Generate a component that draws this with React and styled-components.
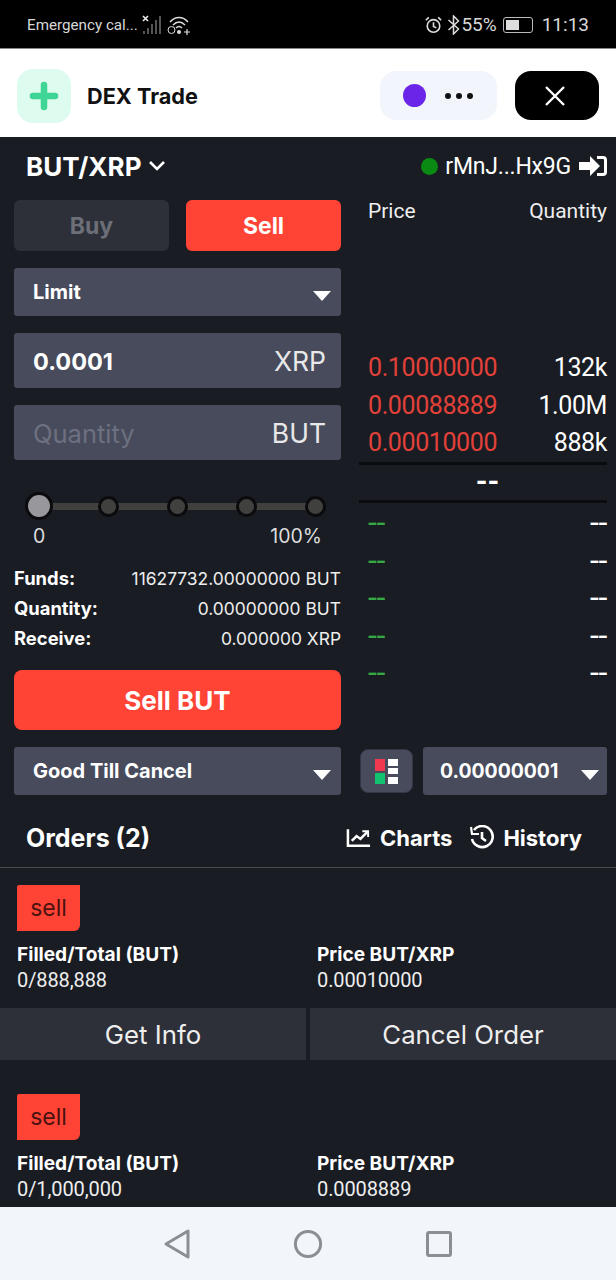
import React from 'react'
import styled, { createGlobalStyle } from 'styled-components'

const sans = `Inter, Lato, sans-serif`
const din = `Roboto, "Liberation Sans", sans-serif`

const asks = [
  ['0.10000000', '132k'],
  ['0.00088889', '1.00M'],
  ['0.00010000', '888k'],
]

const orders = [
  { total: '0/888,888', price: '0.00010000', actions: true },
  { total: '0/1,000,000', price: '0.0008889' },
]

function App() {
  return (
    <Phone>
      <GlobalStyle />
      <StatusBar>
        <StatusSide>
          <Carrier>Emergency cal...</Carrier>
          <svg width="20" height="20" viewBox="0 0 20 20">
            <path d="M1 1l5 5M6 1L1 6" stroke="#eee" strokeWidth="1.6" />
            <path d="M2 16v3M6 13v6M10 9v10M14 5v14M18 1v18" stroke="#555" strokeWidth="2" />
          </svg>
          <WifiIcon width="24" height="20" viewBox="0 0 24 20" fill="none" stroke="#ddd" strokeWidth="1.5">
            <path d="M3 7c5-6 13-6 18 0M6 10c4-4 8-4 12 0M9 13c2-2 4-2 6 0" />
            <circle cx="4.5" cy="15" r="3.5" strokeWidth="1" />
            <circle cx="12" cy="17" r="2" fill="#ddd" stroke="none" />
            <path d="M17 17h6M20 14v6" strokeWidth="1.2" />
          </WifiIcon>
        </StatusSide>
        <StatusSide>
          <svg width="19" height="20" viewBox="0 0 20 20" fill="none" stroke="#ddd" strokeWidth="1.7">
            <circle cx="10" cy="11" r="6.6" />
            <path d="M10 7v4.5l3 1.5M2 5l3-3M18 5l-3-3" />
          </svg>
          <BluetoothIcon width="13" height="20" viewBox="0 0 12 20" fill="none" stroke="#ddd" strokeWidth="1.5">
            <path d="M1 5l10 9-5 5V1l5 5-10 9" />
          </BluetoothIcon>
          <StatusText>55%</StatusText>
          <Battery>
            <BatteryFill />
          </Battery>
          <StatusText>11:13</StatusText>
        </StatusSide>
      </StatusBar>

      <AppBar>
        <AppLogo>
          <svg width="30" height="30" viewBox="0 0 30 30">
            <path d="M15 4v22M4 15h22" stroke="#3fd596" strokeWidth="6.5" strokeLinecap="round" />
          </svg>
        </AppLogo>
        <AppTitle>DEX Trade</AppTitle>
        <WalletPill>
          <WalletDot />
          <Dots>
            <i />
            <i />
            <i />
          </Dots>
        </WalletPill>
        <CloseButton>
          <svg width="22" height="22" viewBox="0 0 22 22">
            <path d="M2 2l18 18M20 2L2 20" stroke="#fff" strokeWidth="2.4" />
          </svg>
        </CloseButton>
      </AppBar>

      <Main>
        <PairRow>
          <PairName>
            BUT/XRP
            <svg width="18" height="12" viewBox="0 0 18 12" fill="none" stroke="#fff" strokeWidth="2.6">
              <path d="M2 2l7 7 7-7" />
            </svg>
          </PairName>
          <Account>
            <GreenDot />
            <AccountId>rMnJ...Hx9G</AccountId>
            <svg width="30" height="24" viewBox="0 0 30 24" fill="#fff">
              <path d="M1 8h11V2l10 10-10 10v-6H1z" />
              <path d="M19 2h6a4 4 0 0 1 4 4v12a4 4 0 0 1-4 4h-6v-3h6a1 1 0 0 0 1-1V6a1 1 0 0 0-1-1h-6z" />
            </svg>
          </Account>
        </PairRow>

        <Columns>
          <LeftColumn>
            <TabRow>
              <SideTab>Buy</SideTab>
              <SideTab $active>Sell</SideTab>
            </TabRow>
            <Select>
              Limit
              <Caret />
            </Select>
            <Field>
              <FieldValue>0.0001</FieldValue>
              <FieldUnit>XRP</FieldUnit>
            </Field>
            <Field>
              <FieldValue $placeholder>Quantity</FieldValue>
              <FieldUnit>BUT</FieldUnit>
            </Field>
            <Slider>
              <SliderTrack>
                <KnobSlot>
                  <Knob $first />
                </KnobSlot>
                <KnobSlot>
                  <Knob />
                </KnobSlot>
                <KnobSlot>
                  <Knob />
                </KnobSlot>
                <KnobSlot>
                  <Knob />
                </KnobSlot>
                <KnobSlot>
                  <Knob />
                </KnobSlot>
              </SliderTrack>
              <SliderLabels>
                <span>0</span>
                <span>100%</span>
              </SliderLabels>
            </Slider>
            <Summary>
              <SummaryRow>
                <b>Funds:</b>
                <span>11627732.00000000 BUT</span>
              </SummaryRow>
              <SummaryRow>
                <b>Quantity:</b>
                <span>0.00000000 BUT</span>
              </SummaryRow>
              <SummaryRow>
                <b>Receive:</b>
                <span>0.000000 XRP</span>
              </SummaryRow>
            </Summary>
            <SubmitButton>Sell BUT</SubmitButton>
            <Select>
              Good Till Cancel
              <Caret />
            </Select>
          </LeftColumn>

          <RightColumn>
            <BookHeader>
              <span>Price</span>
              <span>Quantity</span>
            </BookHeader>
            <AskRows>
              {asks.map(([price, qty]) => (
                <BookRow key={price}>
                  <BookPrice>{price}</BookPrice>
                  <span>{qty}</span>
                </BookRow>
              ))}
            </AskRows>
            <MidPrice>--</MidPrice>
            <BidRows>
              {[0, 1, 2, 3, 4].map((n) => (
                <BookRow key={n}>
                  <BookPrice $bid>--</BookPrice>
                  <EmptyQty>--</EmptyQty>
                </BookRow>
              ))}
            </BidRows>
            <BookFooter>
              <LayoutButton>
                <svg width="23" height="25" viewBox="0 0 23 25">
                  <rect x="0" y="0" width="10" height="12" fill="#f0384f" />
                  <rect x="0" y="14" width="10" height="11" fill="#12c26f" />
                  <rect x="13" y="0" width="10" height="7" fill="#fff" />
                  <rect x="13" y="9" width="10" height="6" fill="#fff" />
                  <rect x="13" y="18" width="10" height="7" fill="#fff" />
                </svg>
              </LayoutButton>
              <PrecisionSelect>
                0.00000001
                <Caret />
              </PrecisionSelect>
            </BookFooter>
          </RightColumn>
        </Columns>

        <OrdersBar>
          <OrdersTitle>Orders (2)</OrdersTitle>
          <OrdersLinks>
            <OrdersLink>
              <svg width="25" height="22" viewBox="0 0 26 22" fill="none" stroke="#fff" strokeWidth="2.6">
                <path d="M2 2v17h23" />
                <path d="M6 14l5-5 4 3 7-7" />
                <path d="M17 4h6v6" strokeWidth="2" />
              </svg>
              Charts
            </OrdersLink>
            <OrdersLink>
              <svg width="25" height="25" viewBox="0 0 25 25" fill="none" stroke="#fff" strokeWidth="2.6">
                <path d="M5 5a10.5 10.5 0 1 1-2 9" />
                <path d="M2 2l1 7h7" strokeWidth="2.2" />
                <path d="M13 7v6l4 3" />
              </svg>
              History
            </OrdersLink>
          </OrdersLinks>
        </OrdersBar>

        <OrdersList>
          {orders.map((order) => (
            <OrderCard key={order.price}>
              <SellBadge>sell</SellBadge>
              <OrderStats>
                <div>
                  <StatLabel>Filled/Total (BUT)</StatLabel>
                  <StatValue>{order.total}</StatValue>
                </div>
                <div>
                  <StatLabel>Price BUT/XRP</StatLabel>
                  <StatValue>{order.price}</StatValue>
                </div>
              </OrderStats>
              {order.actions && (
                <OrderActions>
                  <ActionButton>Get Info</ActionButton>
                  <ActionButton>Cancel Order</ActionButton>
                </OrderActions>
              )}
            </OrderCard>
          ))}
        </OrdersList>
      </Main>

      <NavBar>
        <svg width="28" height="32" viewBox="0 0 28 32" fill="none" stroke="#8b8e92" strokeWidth="3" strokeLinejoin="round">
          <path d="M25 3v26L3 16z" />
        </svg>
        <svg width="30" height="30" viewBox="0 0 30 30" fill="none" stroke="#8b8e92" strokeWidth="3">
          <circle cx="15" cy="15" r="12.6" />
        </svg>
        <svg width="28" height="28" viewBox="0 0 28 28" fill="none" stroke="#8b8e92" strokeWidth="3" strokeLinejoin="round">
          <rect x="2.5" y="2.5" width="23" height="23" rx="1.5" />
        </svg>
      </NavBar>
    </Phone>
  )
}

const GlobalStyle = createGlobalStyle`
  body {
    margin: 0;
    background: #191c23;
  }
`

const Phone = styled.div`
  display: flex;
  flex-direction: column;
  width: 616px;
  height: 1280px;
  overflow: hidden;
  font-family: ${sans};
  color: #fff;
`

const StatusBar = styled.div`
  display: flex;
  align-items: center;
  justify-content: space-between;
  flex: 0 0 49px;
  box-sizing: border-box;
  padding: 1px 27px 0;
  background: #000;
  border-bottom: 1px solid #888;
`

const StatusSide = styled.div`
  display: flex;
  align-items: center;
  gap: 4px;
`

const Carrier = styled.span`
  font: 400 15.2px ${din};
  color: #d8d8d8;
`

const WifiIcon = styled.svg`
  margin-left: 1px;
`

const BluetoothIcon = styled.svg`
  margin-right: -3px;
`

const StatusText = styled.span`
  font: 400 19px ${din};
  color: #d8d8d8;
`

const Battery = styled.div`
  box-sizing: border-box;
  width: 30px;
  height: 16px;
  margin: 0 5px 0 2px;
  padding: 2px;
  border: 1px solid #bbb;
  border-radius: 3px;
`

const BatteryFill = styled.div`
  width: 55%;
  height: 100%;
  background: #ddd;
`

const AppBar = styled.header`
  display: flex;
  align-items: center;
  flex: 0 0 88px;
  padding: 5px 17px 0;
  box-sizing: border-box;
  background: #fff;
`

const AppLogo = styled.div`
  display: flex;
  align-items: center;
  justify-content: center;
  width: 54px;
  height: 54px;
  border-radius: 16px;
  background: #ddfbee;
`

const AppTitle = styled.span`
  margin-left: 16px;
  font: 700 21.7px ${sans};
  color: #111;
`

const WalletPill = styled.div`
  display: flex;
  align-items: center;
  box-sizing: border-box;
  width: 117px;
  height: 49px;
  margin-left: auto;
  padding-left: 23px;
  border-radius: 16px;
  background: #f2f5fb;
`

const WalletDot = styled.div`
  width: 23px;
  height: 23px;
  border-radius: 50%;
  background: #6a25e8;
`

const Dots = styled.div`
  display: flex;
  gap: 5px;
  margin-left: 19px;

  i {
    width: 6px;
    height: 6px;
    border-radius: 50%;
    background: #111;
  }
`

const CloseButton = styled.div`
  display: flex;
  align-items: center;
  justify-content: center;
  box-sizing: border-box;
  width: 84px;
  height: 49px;
  margin-left: 18px;
  padding-right: 4px;
  border-radius: 16px;
  background: #000;
`

const Main = styled.main`
  flex: 1;
  min-height: 0;
  overflow: hidden;
  background: #191c23;
`

const PairRow = styled.div`
  display: flex;
  align-items: center;
  justify-content: space-between;
  height: 58px;
  padding: 0 8px 0 26px;
`

const PairName = styled.div`
  display: flex;
  align-items: center;
  gap: 7px;
  font: 700 26px ${sans};
`

const Account = styled.div`
  display: flex;
  align-items: center;
  gap: 7px;
`

const GreenDot = styled.div`
  width: 17px;
  height: 17px;
  border-radius: 50%;
  background: #0a8a12;
`

const AccountId = styled.span`
  font: 400 23px ${din};
  letter-spacing: -0.2px;
`

const Columns = styled.div`
  display: flex;
  gap: 18px;
  padding: 5px 9px 0 14px;
`

const LeftColumn = styled.div`
  display: flex;
  flex-direction: column;
  width: 327px;
`

const RightColumn = styled.div`
  display: flex;
  flex-direction: column;
  flex: 1;
`

const TabRow = styled.div`
  display: flex;
  gap: 17px;
  margin-bottom: 17px;
`

const SideTab = styled.div`
  display: flex;
  align-items: center;
  justify-content: center;
  flex: 1;
  height: 51px;
  border-radius: 6px;
  background: ${(p) => (p.$active ? '#ff4335' : '#2d3039')};
  color: ${(p) => (p.$active ? '#fff' : '#6c6f78')};
  font: 700 23px ${sans};
`

const Select = styled.div`
  display: flex;
  align-items: center;
  justify-content: space-between;
  box-sizing: border-box;
  height: 48px;
  margin-bottom: 17px;
  padding: 0 10px 0 19px;
  border-radius: 3px;
  background: #474b5c;
  font: 700 20px ${sans};

  &:last-child {
    margin-bottom: 0;
  }
`

const Caret = styled.i`
  width: 0;
  height: 0;
  margin-top: 7px;
  border-left: 9px solid transparent;
  border-right: 9px solid transparent;
  border-top: 10px solid #fff;
`

const Field = styled.div`
  display: flex;
  align-items: center;
  justify-content: space-between;
  box-sizing: border-box;
  height: 55px;
  margin-bottom: 17px;
  padding: 1px 15px 0 19px;
  border-radius: 3px;
  background: #474b5c;
`

const FieldValue = styled.span`
  font: ${(p) => (p.$placeholder ? '400 25.5px' : '700 23.5px')} ${sans};
  color: ${(p) => (p.$placeholder ? '#6d7080' : '#fff')};
`

const FieldUnit = styled.span`
  font: 400 26.5px ${sans};
  color: #e8e8e8;
`

const Slider = styled.div`
  padding: 15px 0 0 11px;
`

const SliderTrack = styled.div`
  display: flex;
  align-items: center;
  justify-content: space-between;
  width: 276px;
  height: 28px;
  margin-left: 14px;
  background: linear-gradient(#40403f, #40403f) center / 100% 7px no-repeat;
`

const KnobSlot = styled.div`
  display: flex;
  justify-content: center;
  width: 0;
`

const Knob = styled.i`
  flex: none;
  box-sizing: border-box;
  width: ${(p) => (p.$first ? 28 : 21)}px;
  height: ${(p) => (p.$first ? 28 : 21)}px;
  border: 3px solid #0b0b0d;
  border-radius: 50%;
  background: ${(p) => (p.$first ? '#98989c' : '#40403f')};
`

const SliderLabels = styled.div`
  display: flex;
  justify-content: space-between;
  padding: 4px 19px 0 8px;
  font: 400 19.5px ${sans};
  color: #ddd;
`

const Summary = styled.div`
  display: flex;
  flex-direction: column;
  gap: 6px;
  margin-top: 18px;
`

const SummaryRow = styled.div`
  display: flex;
  justify-content: space-between;
  align-items: center;
  height: 24px;
  font: 400 17.4px ${sans};
  color: #eee;

  b {
    font-size: 18.4px;
    font-weight: 700;
    color: #fff;
  }
`

const SubmitButton = styled.div`
  display: flex;
  align-items: center;
  justify-content: center;
  height: 60px;
  margin: 20px 0 17px;
  border-radius: 8px;
  background: #ff4335;
  font: 700 26px ${sans};
`

const BookHeader = styled.div`
  display: flex;
  justify-content: space-between;
  height: 24px;
  margin-bottom: 125px;
  padding-left: 9px;
  font: 400 21px/22px ${din};
  color: #eee;
`

const AskRows = styled.div`
  display: flex;
  flex-direction: column;
`

const BidRows = styled.div`
  display: flex;
  flex-direction: column;
  padding-top: 1px;
`

const BookRow = styled.div`
  display: flex;
  align-items: center;
  justify-content: space-between;
  height: 37.5px;
  padding-left: 9px;
  font: 400 25px ${din};
  letter-spacing: -0.4px;
  color: #fff;
`

const BookPrice = styled.span`
  color: ${(p) => (p.$bid ? '#37a846' : '#e2413a')};
  font-size: ${(p) => (p.$bid ? '32px' : 'inherit')};
  line-height: 1;
`

const EmptyQty = styled.span`
  font-size: 32px;
  line-height: 1;
`

const MidPrice = styled.div`
  box-sizing: border-box;
  height: 41px;
  padding-left: 9px;
  border-top: 3px solid #0b0c10;
  border-bottom: 3px solid #0b0c10;
  text-align: center;
  font: 700 30px/32px ${din};
`

const BookFooter = styled.div`
  display: flex;
  align-items: center;
  gap: 10px;
  margin-top: 56px;
`

const LayoutButton = styled.div`
  display: flex;
  align-items: center;
  justify-content: center;
  box-sizing: border-box;
  width: 53px;
  height: 44px;
  margin-left: 1px;
  border: 1px solid #333644;
  border-radius: 8px;
  background: #474b5c;
`

const PrecisionSelect = styled(Select)`
  flex: 1;
  padding: 0 8px 0 17px;
  font-size: 19.4px;
`

const OrdersBar = styled.div`
  display: flex;
  align-items: center;
  justify-content: space-between;
  height: 73px;
  padding: 13px 34px 0 26px;
  box-sizing: border-box;
  border-bottom: 1px solid #4a4c4d;
`

const OrdersTitle = styled.span`
  font: 700 25px ${sans};
`

const OrdersLinks = styled.div`
  display: flex;
  gap: 17px;
`

const OrdersLink = styled.div`
  display: flex;
  align-items: center;
  gap: 9px;
  font: 700 22px ${sans};
`

const OrdersList = styled.div`
  display: flex;
  flex-direction: column;
  gap: 34px;
  padding-top: 17px;
`

const OrderCard = styled.article`
  display: flex;
  flex-direction: column;
`

const SellBadge = styled.div`
  display: flex;
  align-items: center;
  justify-content: center;
  width: 63px;
  height: 46px;
  margin-left: 17px;
  border-radius: 2px 0 6px 0;
  background: #ff4335;
  font: 400 23px ${sans};
  color: #4a1210;
`

const OrderStats = styled.div`
  display: grid;
  grid-template-columns: 300px 1fr;
  padding: 11px 0 15px 17px;
`

const StatLabel = styled.div`
  font: 700 19.1px/25px ${sans};
`

const StatValue = styled.div`
  font: 400 20px/26px ${din};
  letter-spacing: -0.1px;
  color: #eee;
`

const OrderActions = styled.div`
  display: flex;
  gap: 4px;
`

const ActionButton = styled.div`
  display: flex;
  align-items: center;
  justify-content: center;
  flex: 1;
  height: 52px;
  background: #2d3039;
  font: 400 25.8px ${sans};
  color: #eee;
`

const NavBar = styled.nav`
  display: flex;
  align-items: center;
  justify-content: center;
  gap: 102px;
  flex: 0 0 73px;
  background: #f2f6fb;
`

export default App
